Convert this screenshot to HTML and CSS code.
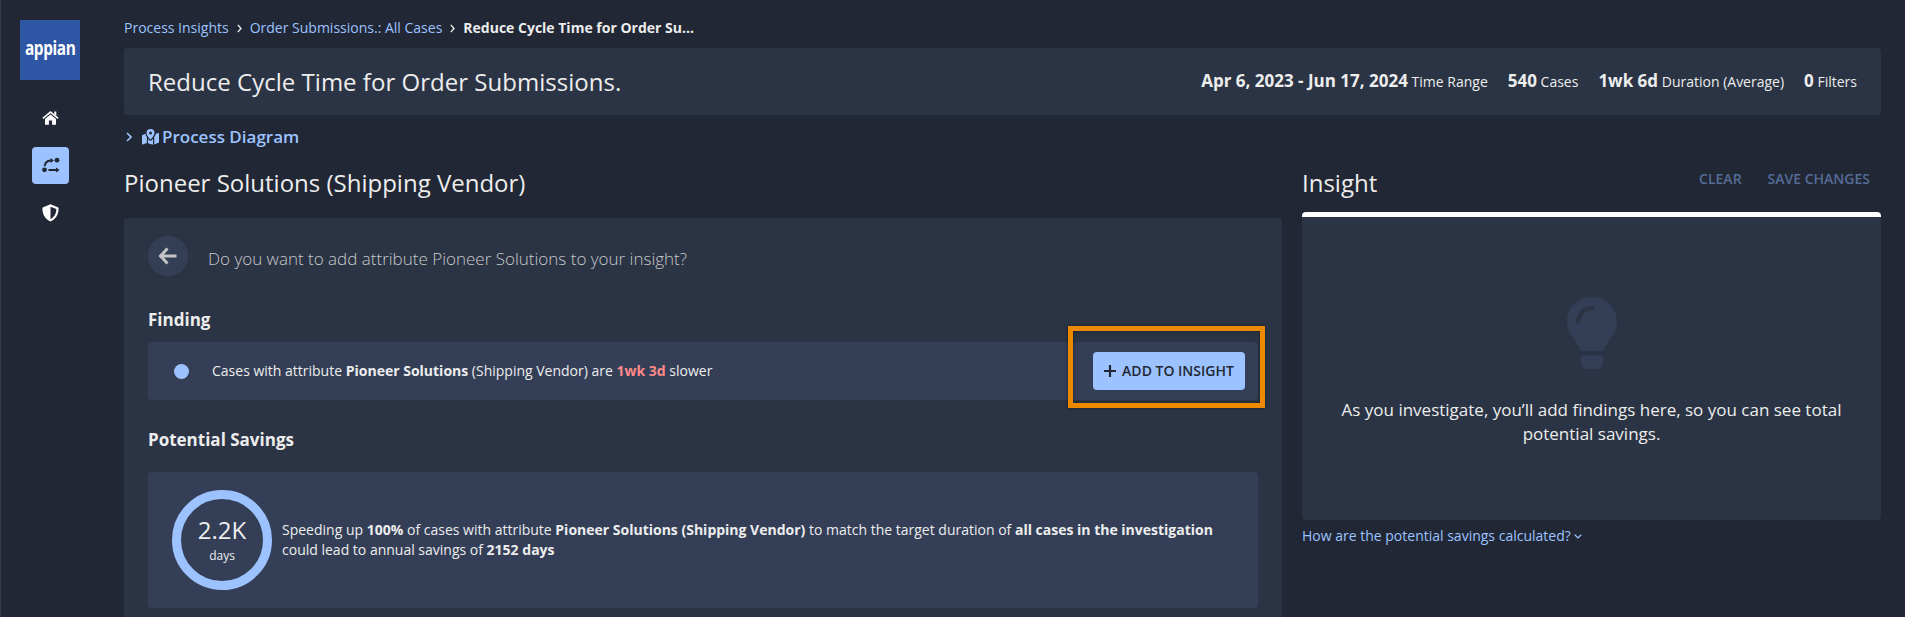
FILE: index.html
```html
<!DOCTYPE html>
<html lang="en">
<head>
<meta charset="utf-8">
<title>Process Insights</title>
<link rel="stylesheet" href="styles.css">
</head>
<body>
<div class="app">
  <nav class="sidebar">
    <div class="logo"><span class="logo-text">appian</span></div>
    <a class="nav-item home"><svg width="17" height="14" viewBox="0 0 17 14"><path d="M8.5 3.4 14 8v5.2q0 .6-.6.6h-3.3V9.6H6.9v4.2H3.6q-.6 0-.6-.6V8z"/><path d="M.9 7.3 8.5 1.1l7.6 6.2" class="line"/><path d="M12.3.6h2v4.2l-2-1.7z"/></svg></a>
    <a class="nav-item active"><svg width="18" height="16" viewBox="0 0 18 16"><circle cx="2.500" cy="12.800" r="2.400"/><circle cx="15" cy="3.200" r="2.400"/><path class="line" d="M2.600 9.200C2.800 6 4.800 3.700 8.800 3.400M6.500 12.900h8.500"/><path d="M8.500.900 12 3.400 8.500 5.900zM14 10.400l3.600 2.500-3.600 2.500z"/></svg></a>
    <a class="nav-item"><svg width="17" height="18" viewBox="0 0 17 18"><path fill-rule="evenodd" d="M8.500.3l7.300 3q.8.300.8 1.200c0 5.600-2.600 10.500-8.100 13.100C3 15 .4 10.100.4 4.500q0-.9.800-1.200zM8.500 2.700V15.200c3.900-2.200 5.800-5.800 5.900-10.200z"/></svg></a>
  </nav>
  <div class="main">
    <div class="crumbs"><a>Process Insights</a><svg class="sep" width="5" height="9" viewBox="0 0 5 9"><path d="M.8.900 4 4.500.8 8.100"/></svg><a>Order Submissions.: All Cases</a><svg class="sep" width="5" height="9" viewBox="0 0 5 9"><path d="M.8.900 4 4.500.8 8.100"/></svg><b>Reduce Cycle Time for Order Su...</b></div>
    <header class="header">
      <h1>Reduce Cycle Time for Order Submissions.</h1>
      <div class="stats">
        <span><b>Apr 6, 2023 - Jun 17, 2024</b> Time Range</span>
        <span><b>540</b> Cases</span>
        <span><b>1wk 6d</b> Duration (Average)</span>
        <span><b>0</b> Filters</span>
      </div>
    </header>
    <div class="diagram"><svg class="chev" width="6" height="10" viewBox="0 0 6 10"><path d="M1 1l4 4-4 4"/></svg><svg class="map" width="17" height="16" viewBox="0 0 17 16"><path d="M0 6.200 3.500 4.700q.3 2 1.400 3.600v5.800L.6 15.600Q0 15.800 0 15.200zM6 9.800q1.200 1.700 2.500 2.300 1.300-.6 2.500-2.300v6L6 14.200zM12.200 8.300q1.500-2.200 1.600-3.500l2.600-.9q.6-.2.600.4v9.300l-4.800 1.900z"/><path fill-rule="evenodd" d="M8.500 0a4 4 0 0 1 4 4c0 2.200-2.500 5.200-4 6.800C7 9.200 4.500 6.200 4.500 4a4 4 0 0 1 4-4zm0 2.500a1.500 1.500 0 1 0 0 3 1.500 1.500 0 0 0 0-3z"/></svg><span>Process Diagram</span></div>
    <div class="columns">
      <section class="left">
        <h2>Pioneer Solutions (Shipping Vendor)</h2>
        <div class="panel">
          <div class="ask"><span class="back"><svg width="20" height="18" viewBox="0 0 20 18"><path d="M9.500 1.500 2.500 9l7 7.500M3 9h15.500"/></svg></span><p>Do you want to add attribute Pioneer Solutions to your insight?</p></div>
          <h3>Finding</h3>
          <div class="finding">
            <i class="dot"></i>
            <p>Cases with attribute <b>Pioneer Solutions</b> (Shipping Vendor) are <b class="slow">1wk 3d</b> slower</p>
            <div class="action"><button><svg width="12" height="12" viewBox="0 0 12 12"><path d="M6 0v12M0 6h12"/></svg><span>ADD TO INSIGHT</span></button><div class="highlight"></div></div>
          </div>
          <h3 class="h-savings">Potential Savings</h3>
          <div class="savings">
            <div class="ring"><span class="num">2.2K</span><span class="unit">days</span></div>
            <p>Speeding up <b>100%</b> of cases with attribute <b>Pioneer Solutions (Shipping Vendor)</b> to match the target duration of <b>all cases in the investigation</b><br>could lead to annual savings of <b>2152 days</b></p>
          </div>
        </div>
      </section>
      <aside class="right">
        <div class="right-head"><h2>Insight</h2><div class="links"><span>CLEAR</span><span>SAVE CHANGES</span></div></div>
        <div class="insight">
          <svg width="50" height="72" viewBox="0 0 50 72"><path fill-rule="evenodd" d="M25 0C39 0 50 11 50 25c0 12-9.500 17-13.500 29h-23C9.500 42 0 37 0 25 0 11 11 0 25 0zm0 9C16 9 9 16 9 25a2.200 2.200 0 0 0 4.500 0c0-6.500 5-11.500 11.500-11.500A2.200 2.200 0 0 0 25 9z"/><path d="M13.500 58.500h23V62q0 10-7 10h-9q-7 0-7-10z"/></svg>
          <p>As you investigate, you’ll add findings here, so you can see total potential savings.</p>
        </div>
        <a class="how"><span>How are the potential savings calculated?</span><svg width="8" height="5" viewBox="0 0 8 5"><path d="M.8.700 4 3.900 7.200.700"/></svg></a>
      </aside>
    </div>
  </div>
</div>
</body>
</html>
```
FILE: styles.css
```css
* { box-sizing: border-box; }
body { margin: 0; background: #212734; color: #ededed; font: 14px/20px "Open Sans", sans-serif; overflow: hidden; }
h1, h2, h3, p { margin: 0; }
svg { display: block; flex: none; }
.app { display: flex; height: 617px; overflow: hidden; border-left: 1px solid #363c49; }
.sidebar { width: 123px; flex: none; }
.logo { width: 60px; height: 60px; margin: 20px 0 20px 19px; background: #2d57a5; display: flex; justify-content: center; }
.logo-text { color: #fff; font: 700 19px/20px "Open Sans", sans-serif; padding-top: 18px; letter-spacing: -.5px; transform: scaleX(.81); }
.nav-item { width: 37px; height: 37px; margin: 0 0 10px 31px; border-radius: 4px; display: flex; align-items: center; justify-content: center; fill: #fff; }
.nav-item.home { padding-bottom: 1px; }
.nav-item .line { fill: none; stroke: #fff; stroke-width: 1.600; }
.nav-item.active { background: #9cc3ff; fill: #212734; padding-bottom: 1px; }
.nav-item.active .line { stroke: #212734; stroke-width: 2; }
.main { width: 1757px; flex: none; }
.crumbs { height: 48px; padding-top: 18px; display: flex; color: #9cc3ff; white-space: nowrap; }
.crumbs b { color: #ededed; }
.sep { margin: 6px 8px 0; fill: none; stroke: #ededed; stroke-width: 1.400; }
.header { height: 67px; border-radius: 4px; background: #2b3444; padding: 0 24px; display: flex; justify-content: space-between; align-items: center; }
h1, h2 { font-size: 24px; line-height: 32px; font-weight: 400; white-space: nowrap; }
h1 { letter-spacing: .02px; }
.stats { display: flex; gap: 20px; white-space: nowrap; }
.stats b { font-size: 17px; }
.diagram { height: 44px; display: flex; align-items: center; font-size: 17px; font-weight: 600; color: #9cc3ff; }
.chev { margin: 0 11px 0 2px; fill: none; stroke: #9cc3ff; stroke-width: 1.600; }
.map { fill: #9cc3ff; margin: 0 3px 1px -1px; }
.columns { display: flex; gap: 20px; }
.left { width: 1158px; padding-top: 8px; }
.panel { margin-top: 19px; height: 420px; background: #2b3444; border-radius: 4px; padding: 18px 24px; }
.ask { display: flex; height: 40px; }
.back { width: 40px; height: 40px; border-radius: 50%; background: #343f57; display: flex; align-items: center; justify-content: center; fill: none; stroke: #c4c4c4; stroke-width: 3; }
.ask p { font-size: 17px; font-weight: 300; line-height: 24px; margin: 11px 0 0 20px; color: #c8c8c8; }
h3 { font-size: 17px; line-height: 24px; font-weight: 700; margin-top: 32px; }
.finding { margin-top: 10px; height: 58px; background: #343f57; border-radius: 4px; display: flex; align-items: center; padding: 0 13px 0 26px; }
.dot { width: 15px; height: 15px; border-radius: 50%; background: #9cc3ff; margin-right: 23px; }
.slow { color: #ff8a8a; }
.action { position: relative; margin-left: auto; }
button { display: flex; align-items: center; justify-content: center; gap: 6px; width: 152px; height: 38px; border: 0; border-radius: 4px; background: #9cc3ff; color: #212734; font: 600 14px/20px "Open Sans", sans-serif; padding: 0; }
button path { stroke: #212734; stroke-width: 2.200; }
.highlight { position: absolute; left: -25px; top: -26px; width: 197px; height: 82px; border: 5px solid #eb8a00; box-shadow: 0 0 3px rgba(0,0,0,.5), inset 0 0 3px rgba(0,0,0,.5); }
.h-savings { margin-top: 28px; }
.savings { margin-top: 20px; height: 136px; background: #343f57; border-radius: 4px; display: flex; align-items: center; padding-left: 24px; white-space: nowrap; }
.ring { width: 100px; height: 100px; border: 9px solid #9cc3ff; border-radius: 50%; margin-right: 10px; display: flex; flex-direction: column; align-items: center; padding-top: 15px; }
.num { font-size: 24px; line-height: 32px; }
.unit { font-size: 12px; line-height: 16px; margin-top: 2px; }
.right { width: 579px; }
.right-head { display: flex; justify-content: space-between; height: 53px; padding-top: 8px; }
.links { display: flex; gap: 26px; padding: 2px 11px 0 0; font-weight: 600; color: #556c96; }
.insight { height: 308px; border-top: 5px solid #fff; border-radius: 4px; background: #2b3444; display: flex; flex-direction: column; align-items: center; padding-top: 80px; fill: #343f57; }
.insight p { width: 520px; margin-top: 29px; text-align: center; font-size: 17px; line-height: 24px; }
.how { display: flex; align-items: center; gap: 3px; margin-top: 6px; color: #9cc3ff; fill: none; stroke-width: 1.300; }
.how path { stroke: #9cc3ff; }
```
